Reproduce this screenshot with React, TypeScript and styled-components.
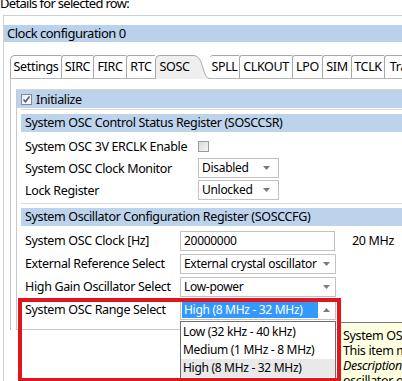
import styled, { createGlobalStyle } from "styled-components";

const GlobalStyle = createGlobalStyle`
  html, body {
    margin: 0;
    padding: 0;
    background: #fff;
  }
  body {
    font-family: "Noto Sans", "Open Sans", sans-serif;
    font-size: 12.5px;
    letter-spacing: -0.35px;
    color: #000;
    overflow: hidden;
  }
`;

const Page = styled.div`
  position: relative;
  width: 402px;
  height: 381px;
  overflow: hidden;
`;

const Caption = styled.div`
  margin-top: -5px;
  height: 16px;
  line-height: 16px;
  font-size: 13px;
  letter-spacing: -0.7px;
  white-space: nowrap;
`;

const Panel = styled.div`
  margin: 4px 0 0 3px;
  padding-top: 9px;
  height: 420px;
  border-top: 1px solid #cfcfcf;
  border-left: 1px solid #cfcfcf;
`;

const Header = styled.div`
  height: 17px;
  line-height: 17px;
  padding-left: 3px;
  font-size: 13px;
  letter-spacing: -0.5px;
  background: #b9d1ea;
  white-space: nowrap;
`;

const TabBar = styled.div`
  display: flex;
  height: 23px;
  margin: 13px 0 0 6px;
`;

const Tab = styled.div<{ $w: number; $noLeft?: boolean; $first?: boolean }>`
  flex: none;
  box-sizing: border-box;
  width: ${(p) => p.$w}px;
  height: 23px;
  border-top: 1px solid #a8a8a8;
  border-left: ${(p) => (p.$noLeft ? "none" : "1px solid #a8a8a8")};
  border-top-left-radius: ${(p) => (p.$first ? 5 : 3)}px;
  text-align: center;
  line-height: 21px;
  white-space: nowrap;
  overflow: hidden;
`;

const ActiveTab = styled.div<{ $w: number }>`
  position: relative;
  z-index: 1;
  flex: none;
  display: flex;
  width: ${(p) => p.$w}px;
  height: 24px;
`;

const ActiveLabel = styled.div`
  flex: 1;
  box-sizing: border-box;
  height: 24px;
  border-top: 1px solid #a8a8a8;
  border-left: 1px solid #a8a8a8;
  border-top-left-radius: 5px;
  background: #efefef;
  text-align: center;
  line-height: 21px;
`;

const Content = styled.div`
  margin-left: 6px;
  padding-top: 10px;
  border-top: 1px solid #b5b5b5;
  border-left: 1px solid #c4c4c4;
`;

const Group = styled.div`
  margin-left: 5px;
  border-top: 1px solid #d6d6d6;
  border-left: 1px solid #c9c9c9;
  border-bottom: 1px solid #c9c9c9;
`;

const InitBar = styled.div`
  display: flex;
  align-items: center;
  gap: 4px;
  height: 18px;
  padding-left: 4px;
  background: #bcd3eb;
`;

const Section = styled.div<{ $padBottom: number }>`
  margin: 1px 0 0 4px;
  padding: 4px 0 ${(p) => p.$padBottom}px;
  border-top: 1px solid #dadada;
`;

const SectionTitle = styled.div`
  height: 18px;
  line-height: 18px;
  padding-left: 4px;
  margin-bottom: 3px;
  background: #bcd3eb;
  white-space: nowrap;
`;

const Row = styled.div<{ $h: number }>`
  display: flex;
  align-items: center;
  height: ${(p) => p.$h}px;
  padding-left: 4px;
  white-space: nowrap;
`;

const Label = styled.div<{ $w: number }>`
  flex: none;
  width: ${(p) => p.$w}px;
`;

const Check = styled.span<{ $on?: boolean }>`
  display: inline-flex;
  align-items: center;
  justify-content: center;
  box-sizing: border-box;
  width: 11px;
  height: 11px;
  border: 1px solid ${(p) => (p.$on ? "#7f8a99" : "#9a9a9a")};
  background: ${(p) =>
    p.$on ? "linear-gradient(135deg, #e9edf3, #ffffff)" : "linear-gradient(135deg, #d9d9d9, #f7f7f7)"};
`;

const Select = styled.div<{ $w: number }>`
  flex: none;
  display: flex;
  align-items: center;
  box-sizing: border-box;
  width: ${(p) => p.$w}px;
  height: 20px;
  border: 1px solid #c2c2c2;
  background: #fff;
  font-size: 12px;
  letter-spacing: -0.3px;
`;

const SelectText = styled.span<{ $hot?: boolean }>`
  flex: 1;
  height: 16px;
  line-height: 16px;
  margin-left: 1px;
  padding-left: 2px;
  overflow: hidden;
  background: ${(p) => (p.$hot ? "#3399ff" : "transparent")};
  color: ${(p) => (p.$hot ? "#fff" : "#000")};
`;

const SelectButton = styled.span<{ $w: number }>`
  flex: none;
  display: flex;
  align-items: center;
  justify-content: center;
  width: ${(p) => p.$w}px;
  height: 18px;
`;

const TextBox = styled.div<{ $w: number }>`
  flex: none;
  box-sizing: border-box;
  width: ${(p) => p.$w}px;
  height: 20px;
  line-height: 18px;
  padding-left: 3px;
  border: 1px solid #c2c2c2;
  font-size: 12px;
  letter-spacing: -0.3px;
`;

const Unit = styled.span`
  margin-left: 17px;
`;

const DropList = styled.div`
  position: absolute;
  left: 180px;
  top: 321px;
  z-index: 2;
  box-sizing: border-box;
  width: 156px;
  height: 62px;
  padding-top: 1px;
  border: 1px solid #6d6d6d;
  background: #fff;
  font-size: 12px;
  letter-spacing: -0.3px;
`;

const DropItem = styled.div<{ $hover?: boolean }>`
  height: 18px;
  line-height: 18px;
  padding-left: 2px;
  overflow: hidden;
  background: ${(p) => (p.$hover ? "#e9e9e9" : "#fff")};
  white-space: nowrap;
`;

const Tooltip = styled.div`
  position: absolute;
  left: 337px;
  top: 322px;
  z-index: 2;
  width: 120px;
  height: 80px;
  padding: 5px 0 0 5px;
  border: 1px solid #767676;
  background: #ffffe1;
  line-height: 15px;
  white-space: nowrap;
`;

const Em = styled.div`
  font-style: italic;
`;

const Marker = styled.div`
  position: absolute;
  left: 18px;
  top: 298px;
  z-index: 3;
  box-sizing: border-box;
  width: 323px;
  height: 84px;
  border: 4px solid #e2141d;
`;

const Arrow = ({ up }: { up?: boolean }) => (
  <svg width="7" height="4" viewBox="0 0 7 4">
    <path d={up ? "M0 4h7L3.5 0z" : "M0 0h7L3.5 4z"} fill="#7b7b7b" />
  </svg>
);

const Swoop = () => (
  <svg width="17" height="24" viewBox="0 0 17 24" style={{ flex: "none", display: "block" }}>
    <path d="M0 0.5C6 0.5 8 6 10 13C12 20 13.5 23 17 23.5L17 24L0 24Z" fill="#efefef" />
    <path d="M0 0.5C6 0.5 8 6 10 13C12 20 13.5 23 17 23.5" fill="none" stroke="#a8a8a8" />
  </svg>
);

const tabs = [
  { label: "Settings", w: 51 },
  { label: "SIRC", w: 32 },
  { label: "FIRC", w: 33 },
  { label: "RTC", w: 29 },
  { label: "SOSC", w: 55, active: true },
  { label: "SPLL", w: 29 },
  { label: "CLKOUT", w: 53 },
  { label: "LPO", w: 30 },
  { label: "SIM", w: 29 },
  { label: "TCLK", w: 33 },
  { label: "Trace", w: 40 },
];

const ranges = ["Low (32 kHz - 40 kHz)", "Medium (1 MHz - 8 MHz)", "High (8 MHz - 32 MHz)"];

export default function App() {
  return (
    <Page>
      <GlobalStyle />
      <Caption>Details for selected row:</Caption>
      <Panel>
        <Header>Clock configuration 0</Header>
        <TabBar>
          {tabs.map((t, i) =>
            t.active ? (
              <ActiveTab key={t.label} $w={t.w}>
                <ActiveLabel>{t.label}</ActiveLabel>
                <Swoop />
              </ActiveTab>
            ) : (
              <Tab key={t.label} $w={t.w} $first={i === 0} $noLeft={tabs[i - 1]?.active}>
                {t.label}
              </Tab>
            )
          )}
        </TabBar>
        <Content>
          <Group>
            <InitBar>
              <Check $on>
                <svg width="9" height="9" viewBox="0 0 9 9">
                  <path d="M1.5 4.5L3.5 6.8L7.5 1.5" fill="none" stroke="#4b5f80" strokeWidth="1.6" />
                </svg>
              </Check>
              Initialize
            </InitBar>
            <Section $padBottom={1}>
              <SectionTitle>System OSC Control Status Register (SOSCCSR)</SectionTitle>
              <Row $h={22}>
                <Label $w={173}>System OSC 3V ERCLK Enable</Label>
                <Check />
              </Row>
              <Row $h={22}>
                <Label $w={173}>System OSC Clock Monitor</Label>
                <Select $w={81}>
                  <SelectText>Disabled</SelectText>
                  <SelectButton $w={24}>
                    <Arrow />
                  </SelectButton>
                </Select>
              </Row>
              <Row $h={22}>
                <Label $w={173}>Lock Register</Label>
                <Select $w={81}>
                  <SelectText>Unlocked</SelectText>
                  <SelectButton $w={24}>
                    <Arrow />
                  </SelectButton>
                </Select>
              </Row>
            </Section>
            <Section $padBottom={8}>
              <SectionTitle>System Oscillator Configuration Register (SOSCCFG)</SectionTitle>
              <Row $h={23}>
                <Label $w={155}>System OSC Clock [Hz]</Label>
                <TextBox $w={155}>20000000</TextBox>
                <Unit>20 MHz</Unit>
              </Row>
              <Row $h={23}>
                <Label $w={155}>External Reference Select</Label>
                <Select $w={156}>
                  <SelectText>External crystal oscillator</SelectText>
                  <SelectButton $w={17}>
                    <Arrow />
                  </SelectButton>
                </Select>
              </Row>
              <Row $h={23}>
                <Label $w={155}>High Gain Oscillator Select</Label>
                <Select $w={156}>
                  <SelectText>Low-power</SelectText>
                  <SelectButton $w={17}>
                    <Arrow />
                  </SelectButton>
                </Select>
              </Row>
              <Row $h={23}>
                <Label $w={155}>System OSC Range Select</Label>
                <Select $w={156}>
                  <SelectText $hot>High (8 MHz - 32 MHz)</SelectText>
                  <SelectButton $w={17}>
                    <Arrow up />
                  </SelectButton>
                </Select>
              </Row>
            </Section>
          </Group>
        </Content>
      </Panel>
      <DropList>
        {ranges.map((r, i) => (
          <DropItem key={r} $hover={i === 2}>
            {r}
          </DropItem>
        ))}
      </DropList>
      <Tooltip>
        <div>System OSC Range Select</div>
        <div>This item must be set</div>
        <Em>Description</Em>
        <div>oscillator of</div>
      </Tooltip>
      <Marker />
    </Page>
  );
}
